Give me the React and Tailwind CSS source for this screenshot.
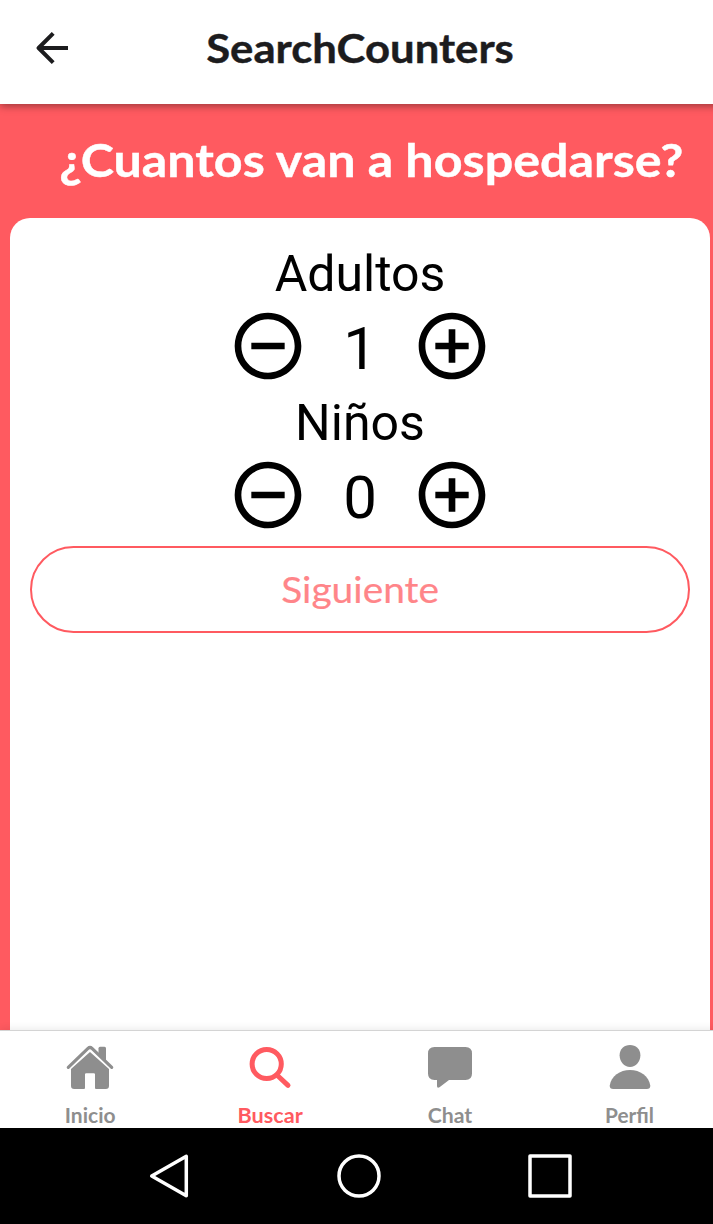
import { MdAddCircleOutline, MdRemoveCircleOutline } from "react-icons/md";

function Counter({ label, value }) {
  return (
    <section className="flex h-[149px] flex-col items-center">
      <h2 className="flex h-[68px] w-full items-center justify-center pt-1 text-[50px] leading-none">{label}</h2>
      <div className="flex h-20 items-center">
        <button aria-label={`Quitar ${label}`}><MdRemoveCircleOutline size={80} /></button>
        <span className="w-26 pt-[5px] text-center text-[60px] leading-none">{value}</span>
        <button aria-label={`Agregar ${label}`}><MdAddCircleOutline size={80} /></button>
      </div>
    </section>
  );
}

function HomeIcon() {
  return (
    <svg viewBox="0 0 50 50" className="size-[50px]" fill="currentColor">
      <path d="M33.500 12V5.300q0-1.500 1.500-1.500h4.500q1.500 0 1.500 1.500v13.500z" />
      <path d="M3.300 24.300L23 5.400Q25 3.500 27 5.400L46.700 24.300" fill="none" stroke="currentColor" strokeWidth="3.200" strokeLinecap="round" />
      <path d="M25 9L44 26V42.800Q44 46 40.800 46H31Q30 46 30 45V31.300Q30 30.200 28.800 30.200H21.200Q20 30.200 20 31.300V45Q20 46 19 46H9.200Q6 46 6 42.800V26z" />
    </svg>
  );
}

function SearchIcon() {
  return (
    <svg viewBox="0 0 50 50" className="size-[50px]" fill="none" stroke="currentColor" strokeWidth="5" strokeLinecap="round">
      <circle cx="21.700" cy="21" r="14.600" />
      <path d="M33 33L43 42.300" />
    </svg>
  );
}

function ChatIcon() {
  return (
    <svg viewBox="0 0 50 50" className="size-[50px]" fill="currentColor">
      <path d="M9.500 4h31Q47 4 47 10.500v20q0 6.500-6.500 6.500H24L14.500 44.300q-2.500 1.300-2.500-1.200V37H9.500Q3 37 3 30.500V10.500Q3 4 9.500 4z" />
    </svg>
  );
}

function PersonIcon() {
  return (
    <svg viewBox="0 0 50 50" className="size-[50px]" fill="currentColor">
      <path d="M25 2c5.800 0 10.400 4 10.400 10.200C35.400 18.600 30.800 23.900 25 23.900S14.600 18.600 14.600 12.200C14.600 6 19.200 2 25 2z" />
      <path d="M8.200 46Q4.700 46 4.700 42.800C6 33 15 27 25 27s19 6 20.300 15.800Q45.300 46 41.800 46z" />
    </svg>
  );
}

const tabs = [
  { label: "Inicio", Icon: HomeIcon, stretch: "scale-x-[1.05]" },
  { label: "Buscar", Icon: SearchIcon, active: true, stretch: "scale-x-[1.08]" },
  { label: "Chat", Icon: ChatIcon, stretch: "scale-x-[1.06]" },
  { label: "Perfil", Icon: PersonIcon, stretch: "scale-x-[1.04]" },
];

export default function App() {
  return (
    <div className="h-[1224px] w-[713px] overflow-hidden bg-white">
      <div className="flex h-full w-[720px] flex-col font-['Roboto',sans-serif] text-black">
        <header className="z-10 grid h-[104px] shrink-0 grid-cols-[104px_1fr_104px] items-center bg-white pb-2 shadow-[0_2px_8px_rgba(0,0,0,0.4)]">
          <button aria-label="Volver" className="flex justify-center">
            <svg viewBox="0 0 32 32" className="size-8" fill="none" stroke="#1c1c1e" strokeWidth="4">
              <path d="M32 16H3M17.200 1.400L2.600 16L17.200 30.600" strokeLinejoin="round" />
            </svg>
          </button>
          <h1 className="scale-x-[1.092] text-center font-['Lato',sans-serif] text-[40px] leading-none font-bold whitespace-nowrap text-[#1c1c1e] [-webkit-text-stroke:0.4px]">SearchCounters</h1>
        </header>

        <main className="flex min-h-0 flex-1 flex-col bg-[#ff5a60] px-[10px]">
          <h2 className="flex h-[114px] shrink-0 origin-left scale-x-[1.092] items-center pb-[2px] pl-[45px] font-['Lato',sans-serif] text-[46px] leading-none font-bold whitespace-nowrap text-white [-webkit-text-stroke:0.4px]">¿Cuantos van a hospedarse?</h2>
          <div className="flex-1 rounded-t-[20px] bg-white p-5">
            <Counter label="Adultos" value={1} />
            <Counter label="Niños" value={0} />
            <button className="mt-[10px] flex h-[87px] w-full items-center justify-center rounded-full border-2 border-[#ff5a60] pb-[2px] font-['Lato',sans-serif] text-[36px] leading-none text-[#ff8589]">
              <span className="scale-x-[1.08] [-webkit-text-stroke:0.2px]">Siguiente</span>
            </button>
          </div>
        </main>

        <nav className="z-10 grid h-[98px] shrink-0 grid-cols-4 border-t border-[#d4d4d4] bg-white shadow-[0_-1px_8px_rgba(0,0,0,0.09)]">
          {tabs.map(({ label, Icon, active, stretch }) => (
            <button key={label} className={`flex flex-col items-center pt-[12px] font-['Lato',sans-serif] text-[20px] leading-6 font-bold ${active ? "text-[#ff5a60]" : "text-[#8e8e8e]"}`}>
              <Icon />
              <span className={`mt-[10px] ${stretch}`}>{label}</span>
            </button>
          ))}
        </nav>

        <footer className="flex h-24 shrink-0 items-center bg-black pl-[147px]">
          <svg viewBox="0 0 48 48" className="size-12" fill="none" stroke="white" strokeWidth="3.500">
            <path d="M39.300 4.300V43.700L4.700 24z" strokeLinejoin="round" />
          </svg>
          <svg viewBox="0 0 48 48" className="ml-[140px] size-12" fill="none" stroke="white" strokeWidth="3.500">
            <circle cx="24" cy="24" r="20" />
          </svg>
          <svg viewBox="0 0 48 48" className="ml-[143px] size-12" fill="none" stroke="white" strokeWidth="3.500">
            <rect x="4" y="4" width="40" height="40" strokeLinejoin="round" />
          </svg>
        </footer>
      </div>
    </div>
  );
}
